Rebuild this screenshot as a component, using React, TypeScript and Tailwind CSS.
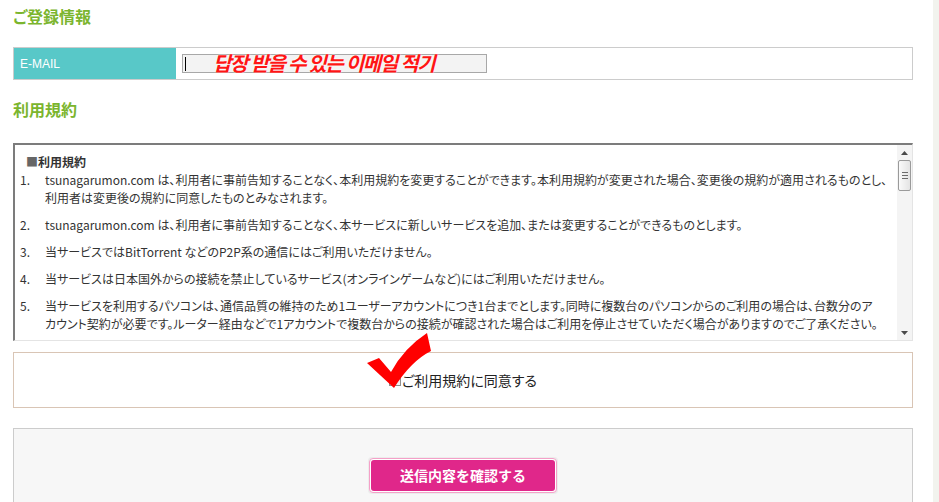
import React from "react";

// Registration form — email row, terms scroll box, agree checkbox, submit.

const JP = "font-['Noto_Sans_CJK_JP',sans-serif]";

const TERMS: string[][] = [
  [
    "tsunagarumon.com は、利用者に事前告知することなく、本利用規約を変更することができます。本利用規約が変更された場合、変更後の規約が適用されるものとし、",
    "利用者は変更後の規約に同意したものとみなされます。",
  ],
  [
    "tsunagarumon.com は、利用者に事前告知することなく、本サービスに新しいサービスを追加、または変更することができるものとします。",
  ],
  ["当サービスではBitTorrent などのP2P系の通信にはご利用いただけません。"],
  ["当サービスは日本国外からの接続を禁止しているサービス(オンラインゲームなど)にはご利用いただけません。"],
  [
    "当サービスを利用するパソコンは、通信品質の維持のため1ユーザーアカウントにつき1台までとします。同時に複数台のパソコンからのご利用の場合は、台数分のア",
    "カウント契約が必要です。ルーター経由などで1アカウントで複数台からの接続が確認された場合はご利用を停止させていただく場合がありますのでご了承ください。",
  ],
];

function Heading({ children }: { children: React.ReactNode }) {
  return (
    <h2
      className={`${JP} h-[26px] text-[16px] font-bold leading-[26px] text-[#7bb52e] [font-feature-settings:'palt']`}
    >
      {children}
    </h2>
  );
}

function Scrollbar() {
  return (
    <div className="flex w-[15px] shrink-0 flex-col items-center bg-[#f4f4f4] py-[4px]">
      <svg width="7" height="4" viewBox="0 0 7 4" className="mt-[2px]">
        <path d="M0 4 L3.5 0 L7 4 Z" fill="#4a4a4a" />
      </svg>
      <div className="mt-[5px] flex h-[31px] w-[13px] flex-col items-center justify-center gap-[2px] rounded-[2px] border border-[#9a9a9a] bg-gradient-to-r from-[#fafafa] to-[#e4e4e4]">
        <span className="h-px w-[6px] bg-[#6c6c6c]" />
        <span className="h-px w-[6px] bg-[#6c6c6c]" />
        <span className="h-px w-[6px] bg-[#6c6c6c]" />
      </div>
      <div className="flex-1" />
      <svg width="7" height="4" viewBox="0 0 7 4" className="mb-[1px]">
        <path d="M0 0 L3.5 4 L7 0 Z" fill="#4a4a4a" />
      </svg>
    </div>
  );
}

export default function App() {
  return (
    <div className="flex h-[502px] w-[939px] overflow-hidden bg-white">
      <main className="w-[933px] shrink-0 pl-[13px] pr-[20px] pt-[3px]">
        <Heading>ご登録情報</Heading>

        <div className="mt-[18px] flex h-[33px] border border-[#cccccc]">
          <div className="flex w-[162px] items-center bg-[#58c8c8] pl-[6px] font-['Liberation_Sans',sans-serif] text-[12px] text-white">
            E-MAIL
          </div>
          <div className="relative flex flex-1 items-center pl-[6px]">
            <div className="flex h-[19px] w-[305px] items-center border border-[#a8a8a8] bg-[#f3f3f3] pl-[2px]">
              <span className="h-[14px] w-px bg-black" />
            </div>
            <span className="absolute left-[37px] top-[1px] font-['Noto_Sans_CJK_KR',sans-serif] text-[20px] font-bold italic leading-[28px] tracking-[-1.3px] text-[#ff1515] [text-shadow:0_0_2px_#fff]">
              답장 받을 수 있는 이메일 적기
            </span>
          </div>
        </div>

        <div className="mt-[16px]">
          <Heading>利用規約</Heading>
        </div>

        <div className="mt-[21px] flex h-[198px] border-l-2 border-t-2 border-b border-r border-l-[#7c7c7c] border-t-[#7c7c7c] border-b-[#e4e4e4] border-r-[#e4e4e4]">
          <div
            className={`${JP} flex-1 overflow-hidden pl-[5px] pt-[8px] text-[12px] leading-[18px] text-[#333] [font-feature-settings:'palt']`}
          >
            <p className="pl-[6px] font-bold">
              <span className="text-[#666]">■</span>利用規約
            </p>
            <ol className="flex flex-col gap-[9px]">
              {TERMS.map((lines, i) => (
                <li key={i} className="flex">
                  <span className="w-[25px] shrink-0">{i + 1}.</span>
                  <div className="whitespace-nowrap">
                    {lines.map((l, j) => (
                      <div key={j}>{l}</div>
                    ))}
                  </div>
                </li>
              ))}
            </ol>
          </div>
          <Scrollbar />
        </div>

        <div className="relative mt-[11px] flex h-[56px] items-center justify-center border border-[#d9c5b5]">
          <label className={`${JP} flex items-center text-[14px] text-[#222] [font-feature-settings:'palt']`}>
            <span className="mr-[1px] h-[12px] w-[12px] border border-[#8f8f8f] bg-gradient-to-br from-[#dcdcdc] to-[#f7f7f7]" />
            ご利用規約に同意する
          </label>
          <svg
            width="66"
            height="60"
            viewBox="0 0 66 60"
            className="absolute left-[352px] top-[-21px]"
          >
            <path d="M1 31 L13 26 L25 40 Q38 16 61 1 L65 19 Q45 29 28 56 Z" fill="#f00" />
          </svg>
        </div>

        <div className="mt-[20px] flex h-[120px] justify-center border border-[#cccccc] bg-[#f7f7f7] pt-[28px]">
          <div className="h-[37px] rounded-[4px] bg-[#ececec] p-[1px]">
            <div className="h-full rounded-[4px] border border-[#f5a0c8] bg-white p-[1px]">
              <button
                className={`${JP} h-[31px] w-[184px] rounded-[3px] bg-[#e0278a] text-[14px] font-bold text-white`}
              >
                送信内容を確認する
              </button>
            </div>
          </div>
        </div>
      </main>
      <aside className="flex-1 bg-[#f2f3ee]" />
    </div>
  );
}
